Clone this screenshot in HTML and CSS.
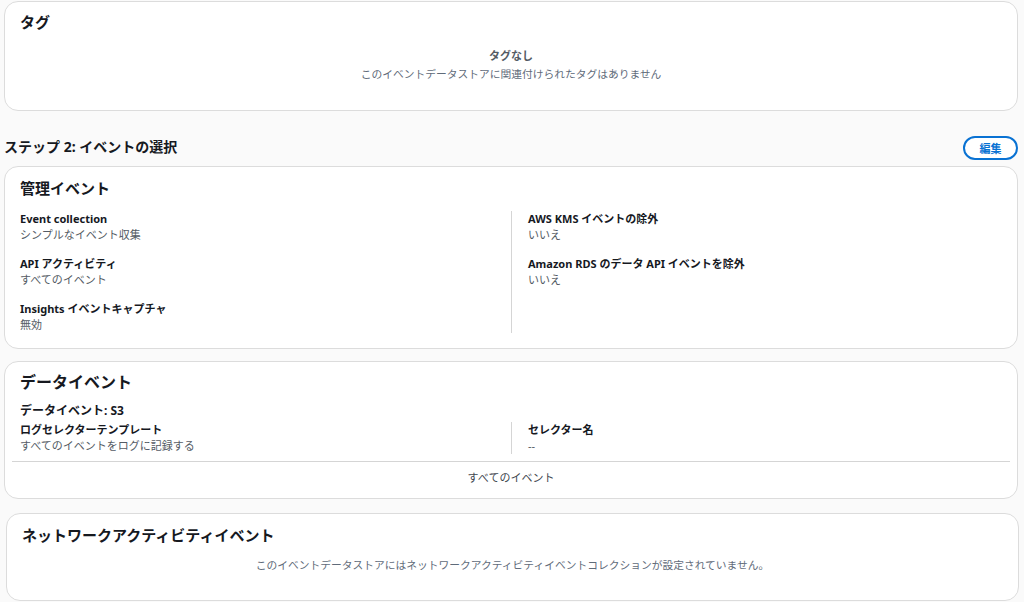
FILE: index.html
```html
<!DOCTYPE html>
<html lang="ja">
<head>
    <meta charset="UTF-8">
    <meta name="viewport" content="width=device-width, initial-scale=1.0">
    <title>イベントデータストアの確認</title>
    <link rel="stylesheet" href="styles.css">
</head>
<body>
    <div class="card tags-card">
        <h2 class="card-title">タグ</h2>
        <div class="empty">
            <div class="empty-title">タグなし</div>
            <div class="empty-text">このイベントデータストアに関連付けられたタグはありません</div>
        </div>
    </div>

    <div class="step-header">
        <h1>ステップ 2: イベントの選択</h1>
        <button class="edit-btn">編集</button>
    </div>

    <div class="card mgmt-card">
        <h2 class="card-title">管理イベント</h2>
        <div class="columns">
            <div class="col">
                <div class="kv">
                    <div class="key">Event collection</div>
                    <div class="value">シンプルなイベント収集</div>
                </div>
                <div class="kv">
                    <div class="key">API アクティビティ</div>
                    <div class="value">すべてのイベント</div>
                </div>
                <div class="kv">
                    <div class="key">Insights イベントキャプチャ</div>
                    <div class="value">無効</div>
                </div>
            </div>
            <div class="col col-right">
                <div class="kv">
                    <div class="key">AWS KMS イベントの除外</div>
                    <div class="value">いいえ</div>
                </div>
                <div class="kv">
                    <div class="key">Amazon RDS のデータ API イベントを除外</div>
                    <div class="value">いいえ</div>
                </div>
            </div>
        </div>
    </div>

    <div class="card data-card">
        <h2 class="card-title big">データイベント</h2>
        <h3 class="sub-title">データイベント: S3</h3>
        <div class="columns tight">
            <div class="col">
                <div class="key">ログセレクターテンプレート</div>
                <div class="value">すべてのイベントをログに記録する</div>
            </div>
            <div class="col col-right">
                <div class="key">セレクター名</div>
                <div class="value">--</div>
            </div>
        </div>
        <div class="all-events">すべてのイベント</div>
    </div>

    <div class="card network-card">
        <h2 class="card-title">ネットワークアクティビティイベント</h2>
        <div class="empty-text center">このイベントデータストアにはネットワークアクティビティイベントコレクションが設定されていません。</div>
    </div>
</body>
</html>
```

FILE: styles.css
```css
body {
    font-family: "Noto Sans", "Noto Sans CJK JP", sans-serif;
    margin: 0;
    padding: 1px 6px 0 4px;
    background-color: #fafafa;
    color: #16191f;
    font-size: 11px;
    line-height: 16px;
}
h1, h2, h3 {
    margin: 0;
}
.card {
    background-color: #fff;
    border: 1px solid #dcdcdc;
    border-radius: 14px;
    box-sizing: border-box;
}
.card-title {
    font-size: 15px;
    font-weight: bold;
    line-height: 20px;
}
.card-title.big {
    font-size: 16px;
}
.tags-card {
    height: 110px;
    padding: 10px 15px;
}
.empty {
    margin-top: 16px;
    text-align: center;
}
.empty-title {
    font-weight: bold;
    color: #545b64;
}
.empty-text {
    color: #5f6b7a;
    font-size: 10.75px;
    margin-top: 2px;
}
.center {
    text-align: center;
}
.step-header {
    display: flex;
    justify-content: space-between;
    align-items: center;
    margin-top: 25px;
    margin-bottom: 6px;
}
.step-header h1 {
    font-size: 14px;
    line-height: 20px;
    margin-top: -2px;
}
.edit-btn {
    font-family: inherit;
    font-size: 11px;
    font-weight: bold;
    color: #0972d3;
    background-color: #fff;
    border: 2px solid #0972d3;
    border-radius: 14px;
    width: 55px;
    height: 24px;
    padding: 0;
    cursor: pointer;
}
.mgmt-card {
    height: 183px;
    padding: 11px 15px;
}
.mgmt-card .columns {
    margin-top: 13px;
}
.columns {
    display: grid;
    grid-template-columns: 1fr 1fr;
}
.col-right {
    border-left: 1px solid #d5d5d5;
    padding-left: 16px;
}
.mgmt-card .col-right {
    height: 122px;
}
.mgmt-card .kv {
    margin-bottom: 13px;
}
.key {
    font-weight: bold;
}
.value {
    color: #545b64;
}
.data-card {
    margin-top: 12px;
    height: 138px;
    padding: 10px 7px 0 7px;
}
.data-card .card-title,
.data-card .sub-title,
.data-card .columns .col:first-child {
    padding-left: 8px;
}
.sub-title {
    font-size: 12px;
    line-height: 16px;
    margin-top: 11px;
}
.columns.tight {
    margin-top: 3px;
    padding-bottom: 7px;
}
.all-events {
    border-top: 1px solid #d5d5d5;
    text-align: center;
    color: #414750;
    padding-top: 8px;
}
.network-card {
    margin: 14px -1px 0 2px;
    height: 88px;
    padding: 11px 15px;
}
.network-card .empty-text {
    margin-top: 12px;
}
```
